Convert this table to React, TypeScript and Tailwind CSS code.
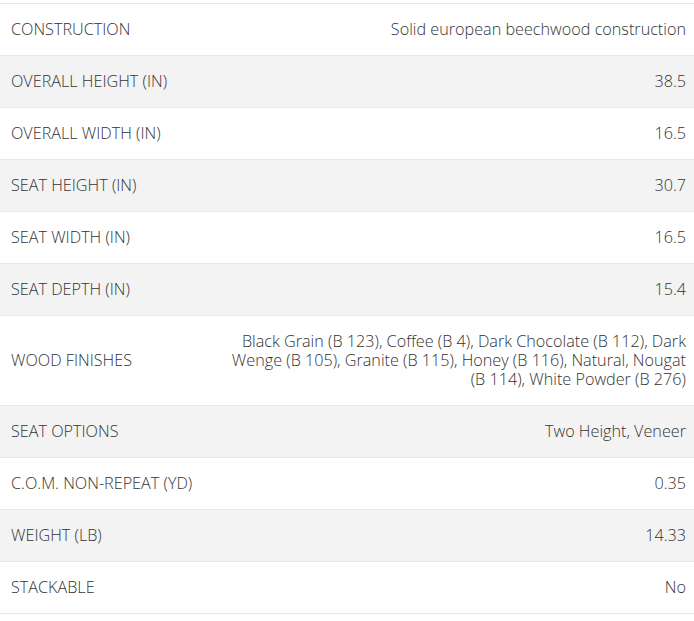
const specs = [
  { label: 'CONSTRUCTION', value: 'Solid european beechwood construction' },
  { label: 'OVERALL HEIGHT (IN)', value: '38.5' },
  { label: 'OVERALL WIDTH (IN)', value: '16.5' },
  { label: 'SEAT HEIGHT (IN)', value: '30.7' },
  { label: 'SEAT WIDTH (IN)', value: '16.5' },
  { label: 'SEAT DEPTH (IN)', value: '15.4' },
  {
    label: 'WOOD FINISHES',
    value:
      'Black Grain (B 123), Coffee (B 4), Dark Chocolate (B 112), Dark Wenge (B 105), Granite (B 115), Honey (B 116), Natural, Nougat (B 114), White Powder (B 276)',
  },
  { label: 'SEAT OPTIONS', value: 'Two Height, Veneer' },
  { label: 'C.O.M. NON-REPEAT (YD)', value: '0.35' },
  { label: 'WEIGHT (LB)', value: '14.33' },
  { label: 'STACKABLE', value: 'No' },
];

export default function App() {
  return (
    <div className="min-h-screen bg-white pt-[3px] font-['Open_Sans',sans-serif] text-[16.2px] font-light leading-[19px] text-[#333]">
      <div className="border-b border-[#e8e8e8]">
        {specs.map((row, i) => (
          <div
            key={row.label}
            className={`flex items-center border-t border-[#e8e8e8] py-4 ${
              i % 2 === 1 ? 'bg-[#f3f3f3]' : 'bg-white'
            }`}
          >
            <div className="w-[224px] shrink-0 pl-[11px]">{row.label}</div>
            <div className="flex-1 pr-[8px] text-right">{row.value}</div>
          </div>
        ))}
      </div>
    </div>
  );
}
